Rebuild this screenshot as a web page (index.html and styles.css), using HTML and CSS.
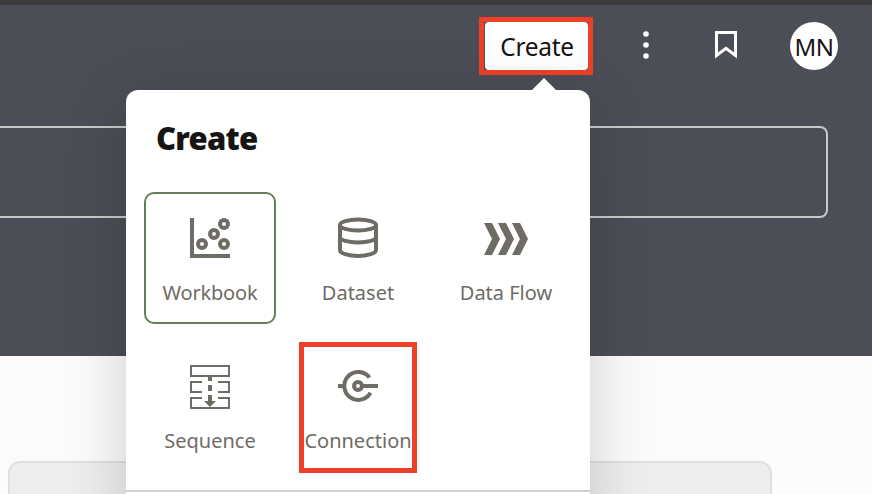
FILE: index.html
```html
<!DOCTYPE html>
<html lang="en">
<head>
<meta charset="utf-8">
<title>Create</title>
<link rel="stylesheet" href="styles.css">
</head>
<body>
<div class="page">
  <header class="hero">
    <div class="toolbar">
      <div class="create-wrap">
        <button class="create-button">Create</button>
        <section class="menu">
          <h1 class="menu-title">Create</h1>
          <div class="tiles">
            <div class="tile selected">
              <svg class="icon" viewBox="0 0 48 48"><path d="M6 4v38h38" stroke-width="4"/><g stroke-width="4"><circle cx="16" cy="30" r="4"/><circle cx="28" cy="20" r="4"/><circle cx="38" cy="10" r="4"/><circle cx="38" cy="30" r="4"/></g></svg>
              <span class="label workbook">Workbook</span>
            </div>
            <div class="tile">
              <svg class="icon" viewBox="0 0 48 48"><g stroke-width="4"><ellipse cx="24" cy="11" rx="18" ry="5.5"/><path d="M6 11v25c0 3.200 8 6 18 6s18-2.800 18-6V11M6 23c0 3.200 8 5.500 18 5.500S42 26.200 42 23"/></g></svg>
              <span class="label">Dataset</span>
            </div>
            <div class="tile">
              <svg class="icon" viewBox="0 0 48 48"><path class="solid" d="M2 9h8l8 16-8 16H2l8-16zM16 9h8l8 16-8 16h-8l8-16zM30 9h8l8 16-8 16h-8l8-16z"/></svg>
              <span class="label">Data Flow</span>
            </div>
            <div class="tile">
              <svg class="icon" viewBox="0 0 48 48"><path stroke-width="2" d="M5 4h38v10H5zM16 20H5v10h11M32 20h11v10H32M16 36H5v10h38V36H32"/><path stroke-width="4" d="M24 15v4M24 23v6M24 33v7"/><path class="solid" d="M18 39h12l-6 6z"/></svg>
              <span class="label">Sequence</span>
            </div>
            <div class="tile marked">
              <svg class="icon" viewBox="0 0 48 48"><g stroke-width="4"><path d="M35.500 15.500A14 14 0 1 0 36.500 30.800M4 24h6M28 24h16"/><circle cx="24" cy="24" r="4"/></g></svg>
              <span class="label">Connection</span>
            </div>
          </div>
          <div class="divider"></div>
        </section>
      </div>
      <svg class="dots" viewBox="0 0 8 28"><circle cx="4" cy="3" r="2.800"/><circle cx="4" cy="14" r="2.800"/><circle cx="4" cy="25" r="2.800"/></svg>
      <svg class="bookmark" viewBox="0 0 22 28"><path d="M1.500 1.500h19v23L11 17.300 1.500 24.500z"/></svg>
      <div class="avatar"><span>MN</span></div>
    </div>
    <div class="search"></div>
  </header>
  <main class="content"><div class="card"></div></main>
</div>
</body>
</html>
```
FILE: styles.css
```css
*, *::before, *::after { box-sizing: border-box; }
body {
  margin: 0;
  overflow: hidden;
  font-family: "Noto Sans", "Open Sans", sans-serif;
}
.page { height: 494px; overflow: hidden; background: #fcfbf9; }
.hero {
  height: 356px;
  background: #4b4e56;
  border-top: 5px solid #3c3c3c;
}
.toolbar {
  height: 121px;
  padding: 12px 34px 0 0;
  display: flex;
  justify-content: flex-end;
  align-items: flex-start;
}
.create-wrap {
  position: relative;
  width: 114px;
  height: 58px;
  margin-right: 50px;
  border: 5px solid #ee4026;
}
.create-button {
  display: block;
  width: 103px;
  height: 48px;
  margin-left: 1px;
  padding: 2px 0 0 1px;
  border: 0;
  border-radius: 4px;
  background: #fff;
  color: #161513;
  font: 24.500px/46px "Noto Sans", sans-serif;
  letter-spacing: -.3px;
  white-space: nowrap;
}
.dots { width: 8px; height: 28px; margin: 14px 65px 0 -1px; fill: #fff; }
.bookmark {
  width: 22px;
  height: 28px;
  margin: 14px 53px 0 0;
  fill: none;
  stroke: #fff;
  stroke-width: 3;
}
.avatar {
  display: flex;
  justify-content: center;
  align-items: center;
  width: 48px;
  height: 48px;
  margin-top: 5px;
  border-radius: 50%;
  background: #fff;
  color: #161513;
  font-size: 24px;
  letter-spacing: -.4px;
}
.search {
  width: 828px;
  height: 92px;
  border: 2px solid #c5caca;
  border-left: 0;
  border-radius: 0 8px 8px 0;
}
.content { padding: 105px 100px 0 8px; }
.card {
  height: 60px;
  border: 2px solid #e1e0de;
  border-radius: 12px;
  background: #efeeec;
}
.menu {
  position: absolute;
  z-index: 2;
  top: 68px;
  left: -358px;
  width: 464px;
  height: 440px;
  padding: 23px 0 0;
  border-radius: 12px;
  background: #fff;
  box-shadow: 0 12px 64px rgba(0, 0, 0, .18);
}
.menu::before {
  content: "";
  position: absolute;
  top: -12px;
  left: 406px;
  border: 12px solid transparent;
  border-top: 0;
  border-bottom-color: #fff;
}
.menu-title {
  height: 50px;
  margin: 0 0 29px 30px;
  color: #161513;
  font-size: 31px;
  font-weight: 900;
  line-height: 50px;
  letter-spacing: -.75px;
}
.tiles {
  display: grid;
  grid-template-columns: repeat(3, 132px);
  grid-auto-rows: 132px;
  gap: 16px;
  margin-left: 18px;
}
.tile {
  position: relative;
  display: flex;
  flex-direction: column;
  align-items: center;
  padding-top: 22px;
  color: #6f6b65;
}
.selected { border: 2px solid #657f56; border-radius: 10px; padding-top: 20px; }
.marked::after {
  content: "";
  position: absolute;
  top: 2px;
  left: 7px;
  width: 118px;
  height: 131px;
  border: 5px solid #ee4026;
}
.icon { width: 48px; height: 48px; fill: none; stroke: #6f6b65; }
.icon .solid { fill: #6f6b65; stroke: none; }
.label {
  margin-top: 17px;
  font-size: 20px;
  line-height: 28px;
  white-space: nowrap;
}
.workbook { letter-spacing: -.2px; }
.divider { height: 2px; margin-top: 18px; background: #d2cfcb; }
```
